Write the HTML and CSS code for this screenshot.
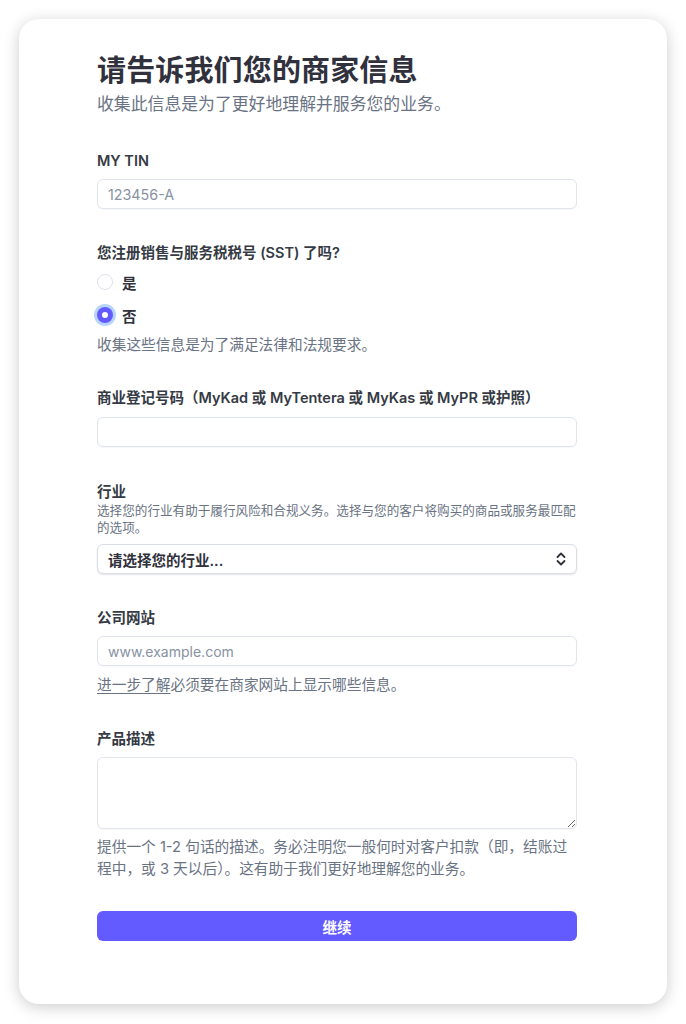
FILE: index.html
```html
<!DOCTYPE html>
<html lang="zh">
<head>
<meta charset="utf-8">
<title>商家信息</title>
<link rel="stylesheet" href="styles.css">
</head>
<body>
<div class="card">
  <h1 class="title">请告诉我们您的商家信息</h1>
  <p class="subtitle">收集此信息是为了更好地理解并服务您的业务。</p>

  <div class="field first">
    <label class="label">MY TIN</label>
    <input class="input" type="text" placeholder="123456-A">
  </div>

  <div class="field">
    <div class="label">您注册销售与服务税税号 (SST) 了吗?</div>
    <div class="radios">
      <label class="radio-row"><span class="radio"></span><span class="radio-text">是</span></label>
      <label class="radio-row"><span class="radio checked"></span><span class="radio-text">否</span></label>
    </div>
    <p class="help help-radio">收集这些信息是为了满足法律和法规要求。</p>
  </div>

  <div class="field field-reg">
    <label class="label">商业登记号码（MyKad 或 MyTentera 或 MyKas 或 MyPR 或护照）</label>
    <input class="input input-reg" type="text">
  </div>

  <div class="field field-industry">
    <div class="label">行业</div>
    <p class="small">选择您的行业有助于履行风险和合规义务。选择与您的客户将购买的商品或服务最匹配的选项。</p>
    <div class="select">
      <span class="select-text">请选择您的行业...</span>
      <svg class="chevron" width="10" height="14" viewBox="0 0 10 14" fill="none" stroke="#30313d" stroke-width="1.8" stroke-linecap="round" stroke-linejoin="round"><path d="M1.5 5 L5 1.5 L8.5 5"/><path d="M1.5 9 L5 12.5 L8.5 9"/></svg>
    </div>
  </div>

  <div class="field field-web">
    <label class="label">公司网站</label>
    <input class="input input-web" type="text" placeholder="www.example.com">
    <p class="help help-after"><a class="link" href="#">进一步了解</a>必须要在商家网站上显示哪些信息。</p>
  </div>

  <div class="field field-desc">
    <label class="label">产品描述</label>
    <textarea class="textarea"></textarea>
    <p class="help help-desc">提供一个 1-2 句话的描述。务必注明您一般何时对客户扣款（即，结账过程中，或 3 天以后）。这有助于我们更好地理解您的业务。</p>
  </div>

  <button class="button" type="button">继续</button>
</div>
</body>
</html>
```

FILE: styles.css
```css
* { box-sizing: border-box; }

html, body {
  margin: 0;
  padding: 0;
  background: #ffffff;
}

body {
  padding: 19px 19px 20px;
  font-family: "Inter", "Noto Sans CJK SC", sans-serif;
  color: #30313d;
}

.card {
  width: 648px;
  height: 985px;
  background: #ffffff;
  border-radius: 20px;
  box-shadow: 0 3px 16px rgba(0, 0, 0, 0.2);
  padding: 34px 90px 0 78px;
}

.title {
  margin: 0;
  font-size: 29px;
  line-height: 36px;
  font-weight: 700;
  color: #30313d;
  letter-spacing: 0.15px;
}

.subtitle {
  margin: 3px 0 0;
  font-size: 16.85px;
  line-height: 24px;
  color: #6a7383;
}

.field {
  display: flex;
  flex-direction: column;
  margin-top: 34px;
}

.first { margin-top: 35px; }
.field-reg { margin-top: 32px; }
.field-industry { margin-top: 35px; }
.field-web { margin-top: 34px; }
.field-desc { margin-top: 33px; }

.label {
  font-size: 14.5px;
  line-height: 20px;
  font-weight: 600;
  color: #353a44;
}

.input {
  margin-top: 8px;
  height: 30px;
  width: 480px;
  border: 1px solid #e0e4ec;
  border-radius: 6px;
  padding: 0 10px;
  font-family: "Inter", "Noto Sans CJK SC", sans-serif;
  font-size: 14.3px;
  color: #30313d;
  background: #fff;
  box-shadow: 0 1px 1px rgba(0, 0, 0, 0.03);
  outline: none;
}

.input-reg { margin-top: 9px; }
.input-web { font-size: 14px; }

.input::placeholder { color: #8792a2; }

.radios {
  display: flex;
  flex-direction: column;
  gap: 9px;
  margin-top: 7px;
}

.radio-row {
  display: flex;
  align-items: center;
  height: 24px;
  gap: 9px;
}

.radio {
  width: 16px;
  height: 16px;
  border-radius: 50%;
  border: 1px solid #dde1e8;
  background: #fff;
  display: flex;
  align-items: center;
  justify-content: center;
}

.radio.checked {
  border: none;
  background: #635bff;
  box-shadow: 0 0 0 3px #b6d4fc;
}

.radio.checked::after {
  content: "";
  width: 6px;
  height: 6px;
  border-radius: 50%;
  background: #fff;
}

.radio-text {
  font-size: 14.5px;
  font-weight: 600;
  color: #30313d;
}

.help {
  margin: 0;
  font-size: 14.7px;
  line-height: 22px;
  color: #6a7383;
}

.help-radio { margin-top: 7px; }
.help-after { margin-top: 8px; }
.help-desc { margin-top: 7px; }

.link {
  color: #6a7383;
  text-decoration: underline;
  text-underline-offset: 3px;
}

.small {
  margin: 0;
  font-size: 12.6px;
  line-height: 17px;
  color: #6a7383;
}

.select {
  margin-top: 8px;
  height: 30px;
  border: 1px solid #d9dde5;
  border-radius: 6px;
  padding: 0 10px 0 10px;
  display: flex;
  align-items: center;
  justify-content: space-between;
  box-shadow: 0 1px 2px rgba(0, 0, 0, 0.1);
  background: #fff;
}

.select-text {
  font-size: 14.5px;
  font-weight: 600;
  color: #30313d;
}

.chevron { display: block; }

.textarea {
  margin-top: 8px;
  height: 72px;
  width: 480px;
  border: 1px solid #e0e4ec;
  border-radius: 6px;
  padding: 6px 10px;
  resize: vertical;
  font-family: "Inter", "Noto Sans CJK SC", sans-serif;
  font-size: 14.5px;
  outline: none;
  box-shadow: 0 1px 1px rgba(0, 0, 0, 0.03);
}

.button {
  margin-top: 31px;
  width: 480px;
  height: 30px;
  border: none;
  border-radius: 6px;
  background: #635bff;
  color: #fff;
  font-family: "Inter", "Noto Sans CJK SC", sans-serif;
  font-size: 14.5px;
  font-weight: 600;
  display: block;
}
```
